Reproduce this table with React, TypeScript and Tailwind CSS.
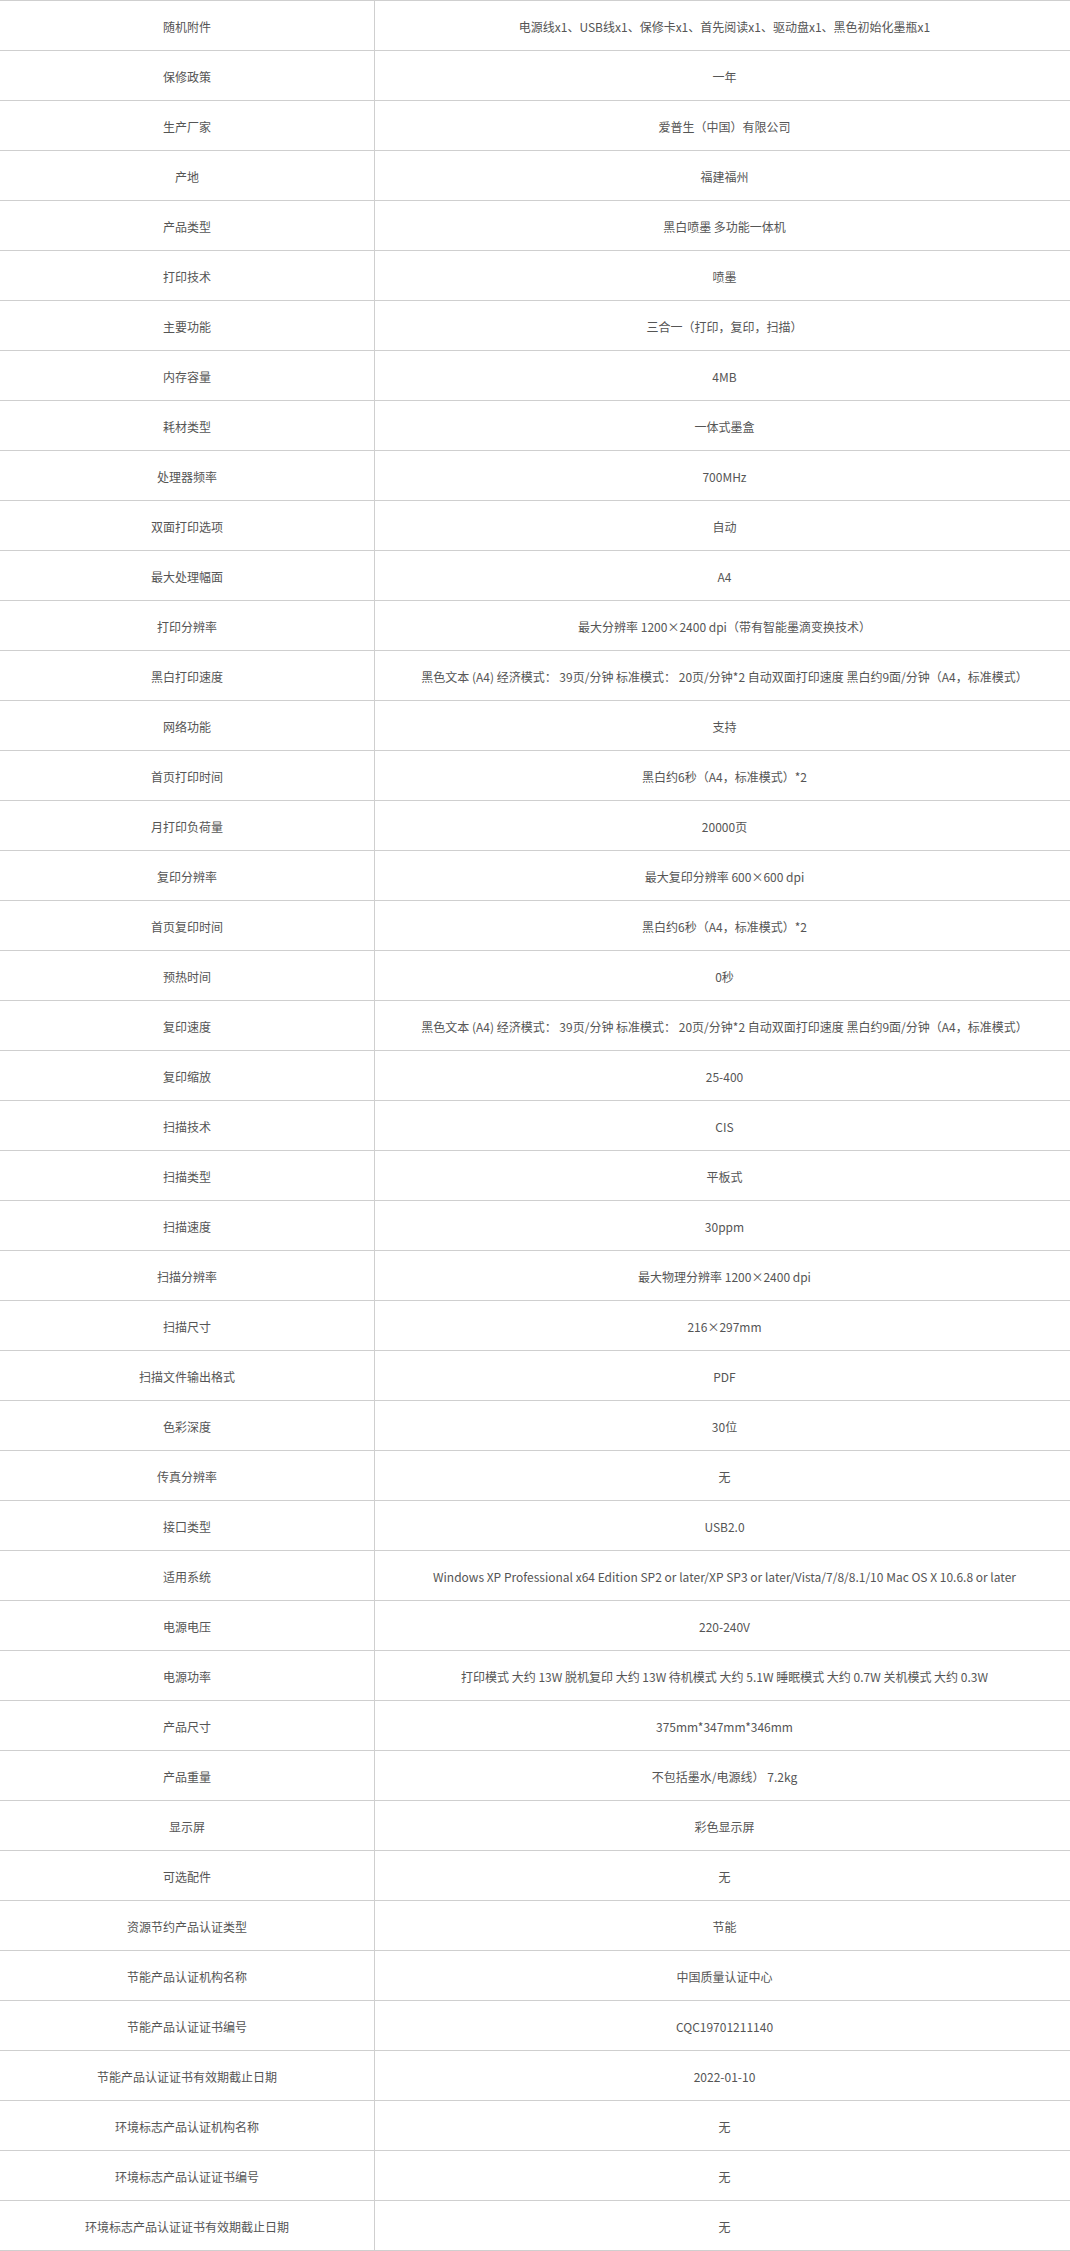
const rows: [string, string][] = [
  ["随机附件", "电源线x1、USB线x1、保修卡x1、首先阅读x1、驱动盘x1、黑色初始化墨瓶x1"],
  ["保修政策", "一年"],
  ["生产厂家", "爱普生（中国）有限公司"],
  ["产地", "福建福州"],
  ["产品类型", "黑白喷墨 多功能一体机"],
  ["打印技术", "喷墨"],
  ["主要功能", "三合一（打印，复印，扫描）"],
  ["内存容量", "4MB"],
  ["耗材类型", "一体式墨盒"],
  ["处理器频率", "700MHz"],
  ["双面打印选项", "自动"],
  ["最大处理幅面", "A4"],
  ["打印分辨率", "最大分辨率 1200×2400 dpi（带有智能墨滴变换技术）"],
  ["黑白打印速度", "黑色文本 (A4) 经济模式： 39页/分钟 标准模式： 20页/分钟*2 自动双面打印速度 黑白约9面/分钟（A4，标准模式）"],
  ["网络功能", "支持"],
  ["首页打印时间", "黑白约6秒（A4，标准模式）*2"],
  ["月打印负荷量", "20000页"],
  ["复印分辨率", "最大复印分辨率 600×600 dpi"],
  ["首页复印时间", "黑白约6秒（A4，标准模式）*2"],
  ["预热时间", "0秒"],
  ["复印速度", "黑色文本 (A4) 经济模式： 39页/分钟 标准模式： 20页/分钟*2 自动双面打印速度 黑白约9面/分钟（A4，标准模式）"],
  ["复印缩放", "25-400"],
  ["扫描技术", "CIS"],
  ["扫描类型", "平板式"],
  ["扫描速度", "30ppm"],
  ["扫描分辨率", "最大物理分辨率 1200×2400 dpi"],
  ["扫描尺寸", "216×297mm"],
  ["扫描文件输出格式", "PDF"],
  ["色彩深度", "30位"],
  ["传真分辨率", "无"],
  ["接口类型", "USB2.0"],
  ["适用系统", "Windows XP Professional x64 Edition SP2 or later/XP SP3 or later/Vista/7/8/8.1/10 Mac OS X 10.6.8 or later"],
  ["电源电压", "220-240V"],
  ["电源功率", "打印模式 大约 13W 脱机复印 大约 13W 待机模式 大约 5.1W 睡眠模式 大约 0.7W 关机模式 大约 0.3W"],
  ["产品尺寸", "375mm*347mm*346mm"],
  ["产品重量", "不包括墨水/电源线） 7.2kg"],
  ["显示屏", "彩色显示屏"],
  ["可选配件", "无"],
  ["资源节约产品认证类型", "节能"],
  ["节能产品认证机构名称", "中国质量认证中心"],
  ["节能产品认证证书编号", "CQC19701211140"],
  ["节能产品认证证书有效期截止日期", "2022-01-10"],
  ["环境标志产品认证机构名称", "无"],
  ["环境标志产品认证证书编号", "无"],
  ["环境标志产品认证证书有效期截止日期", "无"],
];

export default function App() {
  return (
    <div className="w-[1070px] bg-white text-[12px] text-[#555] font-['Noto_Sans_CJK_SC','Noto_Sans',sans-serif] border-b border-[#cfcfcf]">
      {rows.map(([label, value]) => (
        <div key={label} className="flex h-[50px] border-t border-[#cfcfcf]">
          <div className="w-[375px] shrink-0 border-r border-[#cfcfcf] flex items-center justify-center pt-[3px]">
            {label}
          </div>
          <div className="flex-1 min-w-0 flex items-center justify-center pt-[3px] pl-[4px] whitespace-nowrap">
            {value}
          </div>
        </div>
      ))}
    </div>
  );
}
